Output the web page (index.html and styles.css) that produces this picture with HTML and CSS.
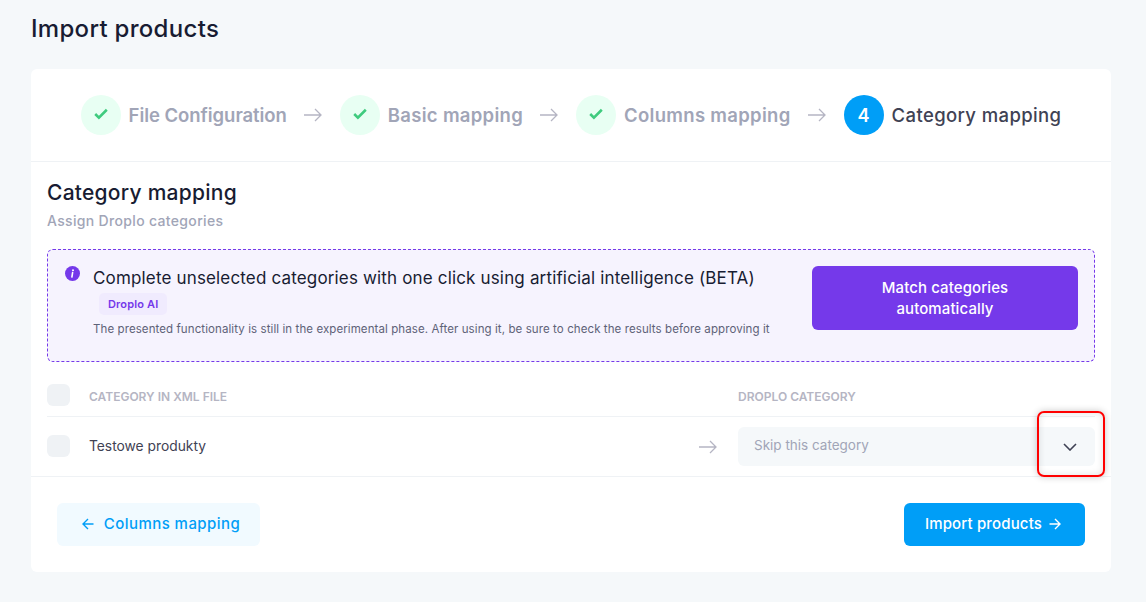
FILE: index.html
```html
<!DOCTYPE html>
<html lang="en">
<head>
  <meta charset="UTF-8">
  <title>Import products</title>
  <link rel="stylesheet" href="styles.css">
</head>
<body>
  <h1 class="page-title">Import products</h1>
  <div class="card">
    <div class="steps">
      <div class="step done first">
        <span class="step-circle"><svg width="16" height="16" viewBox="0 0 16 16"><path d="M2.2 8l3.7 3.6 7.9-7.8" class="check"/></svg></span>
        <span class="step-label">File Configuration</span>
      </div>
      <svg class="step-arrow" width="18" height="14" viewBox="0 0 18 14"><path d="M0 7h17M11 1l6 6-6 6"/></svg>
      <div class="step done">
        <span class="step-circle"><svg width="16" height="16" viewBox="0 0 16 16"><path d="M2.2 8l3.7 3.6 7.9-7.8" class="check"/></svg></span>
        <span class="step-label">Basic mapping</span>
      </div>
      <svg class="step-arrow" width="18" height="14" viewBox="0 0 18 14"><path d="M0 7h17M11 1l6 6-6 6"/></svg>
      <div class="step done">
        <span class="step-circle"><svg width="16" height="16" viewBox="0 0 16 16"><path d="M2.2 8l3.7 3.6 7.9-7.8" class="check"/></svg></span>
        <span class="step-label">Columns mapping</span>
      </div>
      <svg class="step-arrow" width="18" height="14" viewBox="0 0 18 14"><path d="M0 7h17M11 1l6 6-6 6"/></svg>
      <div class="step active">
        <span class="step-circle">4</span>
        <span class="step-label">Category mapping</span>
      </div>
    </div>

    <div class="section">
      <h2 class="section-title">Category mapping</h2>
      <p class="section-sub">Assign Droplo categories</p>

      <div class="ai-box">
        <svg class="ai-icon" width="15" height="15" viewBox="0 0 15 15">
          <circle cx="7.5" cy="7.5" r="7.5" fill="#7539ea"/>
          <circle cx="8" cy="4.2" r="1" fill="#fff"/>
          <path d="M7.6 6.6l-.7 4.4" stroke="#fff" stroke-width="1.6" stroke-linecap="round"/>
        </svg>
        <div class="ai-text">
          <div class="ai-title">Complete unselected categories with one click using artificial intelligence (BETA)</div>
          <span class="ai-badge">Droplo AI</span>
          <div class="ai-note">The presented functionality is still in the experimental phase. After using it, be sure to check the results before approving it</div>
        </div>
        <button class="ai-button">Match categories automatically</button>
      </div>

      <div class="table-head">
        <span class="checkbox"></span>
        <span class="col-name">CATEGORY IN XML FILE</span>
        <span class="col-target">DROPLO CATEGORY</span>
      </div>
    </div>

    <div class="table-row">
      <span class="checkbox"></span>
      <span class="row-name">Testowe produkty</span>
      <svg class="row-arrow" width="18" height="14" viewBox="0 0 18 14"><path d="M0 7h17M11 1l6 6-6 6"/></svg>
      <div class="select">
        <span class="select-text">Skip this category</span>
        <svg width="14" height="8" viewBox="0 0 14 8"><path d="M1 1l6 6 6-6"/></svg>
      </div>
    </div>

    <div class="footer">
      <button class="btn btn-back">
        <svg width="12" height="12" viewBox="0 0 12 12"><path d="M11.5 6H1M6 1L1 6l5 5"/></svg>
        Columns mapping
      </button>
      <button class="btn btn-next">
        Import products
        <svg width="12" height="12" viewBox="0 0 12 12"><path d="M.5 6H11M6 1l5 5-5 5"/></svg>
      </button>
    </div>
  </div>
  <div class="highlight"></div>
</body>
</html>
```

FILE: styles.css
```css
* {
	box-sizing: border-box;
}
html, body {
	margin: 0;
	height: 602px;
	overflow: hidden;
}
body {
	position: relative;
	padding: 0 35px 0 31px;
	background: #f5f8fa;
	font-family: "Inter", "Liberation Sans", sans-serif;
	color: #1b1b28;
}
.page-title {
	margin: 0;
	height: 69px;
	padding-top: 14px;
	font-size: 24px;
	line-height: 30px;
	font-weight: 500;
	letter-spacing: 0.3px;
	color: #181c32;
}
.card {
	height: 503px;
	background: #fff;
	border-radius: 6px;
}

/* stepper */
.steps {
	display: flex;
	align-items: center;
	justify-content: center;
	height: 93px;
	border-bottom: 1px solid #eff2f5;
}
.step {
	display: flex;
	align-items: center;
	gap: 8px;
}
.step-circle {
	display: flex;
	align-items: center;
	justify-content: center;
	width: 40px;
	height: 40px;
	border-radius: 50%;
	font-size: 18px;
	font-weight: 600;
}
.step-circle svg {
	margin-bottom: 2px;
}
.step-label {
	font-size: 18.5px;
	font-weight: 600;
	letter-spacing: 0.3px;
	white-space: nowrap;
}
.first .step-label {
	letter-spacing: -0.05px;
}
.done .step-circle {
	background: #e8fff3;
}
.done .step-label {
	color: #a1a5b7;
}
.active .step-circle {
	background: #009ef7;
	color: #fff;
}
.active .step-label {
	color: #3f4254;
	font-weight: 500;
	letter-spacing: 0.38px;
}
.check {
	fill: none;
	stroke: #3fcb7e;
	stroke-width: 2.6;
}
.step-arrow {
	margin: 0 18px 0 17px;
}
.step-arrow path, .row-arrow path {
	fill: none;
	stroke: #b5b5c3;
	stroke-width: 1.3;
}

/* section */
.section {
	padding: 0 16px;
}
.section-title {
	margin: 0;
	padding-top: 18px;
	font-size: 21px;
	line-height: 26px;
	font-weight: 500;
	letter-spacing: 0.25px;
	color: #181c32;
}
.section-sub {
	margin: 5px 0 18px;
	font-size: 14px;
	line-height: 20px;
	font-weight: 500;
	letter-spacing: 0.33px;
	color: #a1a5b7;
}

/* ai box */
.ai-box {
	display: flex;
	align-items: flex-start;
	height: 113px;
	padding: 16px 16px 0 17px;
	background: #f6f3fe;
	border: 1px dashed #7539ea;
	border-radius: 6px;
}
.ai-icon {
	flex: none;
	margin-right: 13px;
}
.ai-text {
	flex: 1;
}
.ai-title {
	font-size: 17px;
	line-height: 24px;
	letter-spacing: 0.16px;
	color: #181c32;
	white-space: nowrap;
}
.ai-badge {
	display: inline-block;
	margin: 3px 0 0 6px;
	padding: 0 9px;
	height: 22px;
	line-height: 22px;
	font-size: 11px;
	font-weight: 600;
	letter-spacing: 0.15px;
	color: #7539ea;
	background: #f0ebfe;
	border-radius: 5px;
}
.ai-note {
	margin-top: 6px;
	font-size: 11.5px;
	line-height: 16px;
	letter-spacing: 0.09px;
	color: #5e6278;
	white-space: nowrap;
}
.ai-button {
	flex: none;
	width: 266px;
	height: 64px;
	padding: 0 50px;
	border: 0;
	border-radius: 6px;
	background: #7539ea;
	color: #fff;
	font: 500 15px/21px "Inter", "Liberation Sans", sans-serif;
	letter-spacing: 0.1px;
}

/* table */
.checkbox {
	flex: none;
	width: 23px;
	height: 22px;
	background: #eff2f5;
	border-radius: 6px;
}
.table-head {
	display: flex;
	align-items: center;
	height: 55px;
	padding-top: 21px;
	padding-bottom: 9px;
	border-bottom: 1px solid #eff2f5;
	font-size: 12px;
	font-weight: 600;
	color: #b5b5c3;
}
.col-name {
	margin-left: 19px;
	width: 649px;
	padding-top: 2px;
}
.col-target {
	padding-top: 2px;
}
.table-row {
	display: flex;
	align-items: center;
	height: 60px;
	padding: 0 16px;
	border-bottom: 1px solid #eff2f5;
}
.table-row .checkbox {
	margin-bottom: 1px;
}
.row-name {
	margin: 0 0 2px 19px;
	width: 610px;
	font-size: 13.8px;
	color: #3f4254;
}
.row-arrow {
	flex: none;
	margin-right: 21px;
}
.select {
	flex: 1;
	display: flex;
	align-items: center;
	justify-content: space-between;
	height: 39px;
	padding: 0 18px 0 16px;
	background: #f5f8fa;
	border-radius: 6px;
	font-size: 13.5px;
	color: #a1a5b7;
}
.select-text {
	margin-bottom: 3px;
}
.select path {
	fill: none;
	stroke: #3f4254;
	stroke-width: 1.6;
}

/* footer */
.footer {
	display: flex;
	justify-content: space-between;
	padding: 26px 26px 0;
}
.btn {
	display: flex;
	align-items: center;
	justify-content: center;
	height: 43px;
	border: 0;
	border-radius: 6px;
	font: 500 15px "Inter", "Liberation Sans", sans-serif;
}
.btn path {
	fill: none;
	stroke: currentColor;
	stroke-width: 1.4;
}
.btn-back {
	gap: 10px;
	width: 203px;
	padding: 0 0 2px 5px;
	letter-spacing: 0.45px;
	background: #f1faff;
	color: #009ef7;
}
.btn-next {
	gap: 7px;
	width: 181px;
	padding: 0 3px 2px 0;
	letter-spacing: 0.15px;
	background: #009ef7;
	color: #fff;
}

/* red annotation over the dropdown arrow */
.highlight {
	position: absolute;
	left: 1037px;
	top: 411px;
	width: 68px;
	height: 66px;
	border: 2px solid #f00;
	border-radius: 7px;
	box-shadow: 0 0 7px rgba(0, 0, 0, 0.22), inset 0 0 7px rgba(0, 0, 0, 0.12);
}
```
